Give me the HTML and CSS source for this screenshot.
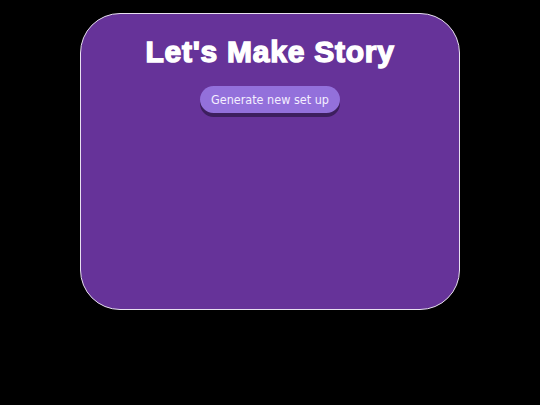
FILE: index.html
```html
<!DOCTYPE html>
<html lang="en">
<head>
    <meta charset="UTF-8">
    <meta name="viewport" content="width=device-width, initial-scale=1.0">
    <title>Let's Make Story</title>
    <link rel="stylesheet" href="styles.css">
</head>
<body>
    <div class="story-card">
        <h1>Let's Make Story</h1>
        <button class="setup-btn">Generate new set up</button>
    </div>
</body>
</html>
```

FILE: styles.css
```css
body {
    font-family: 'DejaVu Sans', sans-serif;
    background-color: #000;
    margin: 0;
    padding: 13px 0 0;
}
.story-card {
    width: 378px;
    height: 295px;
    margin: 0 auto;
    background-color: #663399;
    border: 1px solid #e8e0f0;
    border-radius: 40px;
    display: flex;
    flex-direction: column;
    align-items: center;
}
.story-card h1 {
    font-family: 'Liberation Sans', Arial, sans-serif;
    font-weight: 900;
    font-size: 30px;
    color: #fff;
    -webkit-text-stroke: 1.4px #fff;
    letter-spacing: 0.75px;
    margin: 21px 0 0;
    line-height: 34px;
}
.setup-btn {
    margin-top: 17px;
    font-family: 'DejaVu Sans Condensed', 'DejaVu Sans', sans-serif;
    font-size: 12.5px;
    color: #f4efff;
    background-color: #9370db;
    border: none;
    border-radius: 14px;
    padding: 0 11px;
    height: 27px;
    box-shadow: 0 4px 0 #3d1f5e;
    cursor: pointer;
}
```
